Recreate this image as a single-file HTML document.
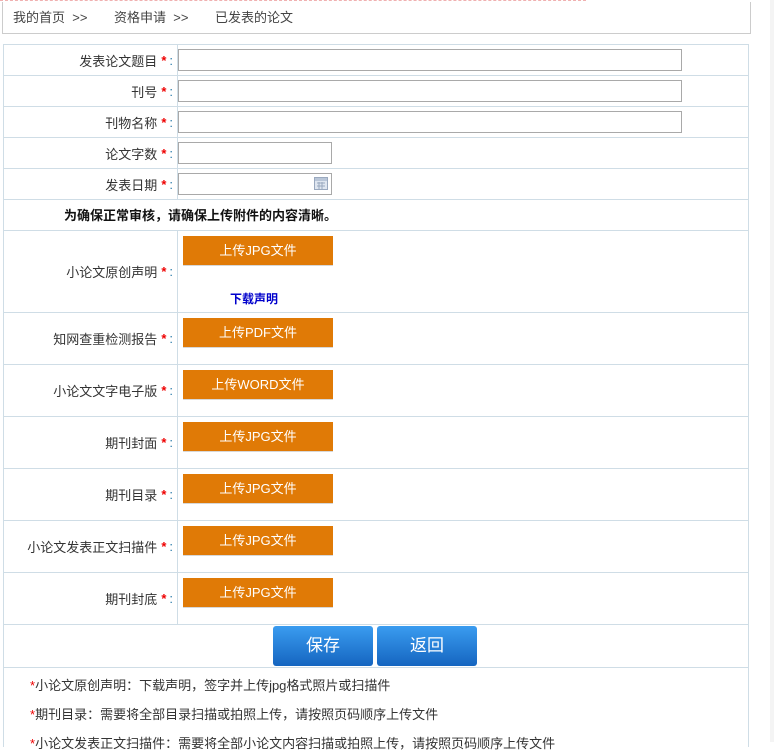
<!DOCTYPE html>
<html><head><meta charset="utf-8"><style>
*{margin:0;padding:0;box-sizing:border-box}
body{width:774px;height:742px;overflow:hidden;background:#fff;font-family:"Liberation Sans","Noto Sans CJK SC",sans-serif;font-size:13px;color:#333;position:relative}
.top{position:absolute;left:0;top:0;width:586px;border-top:1px dashed #f0b0b0}
.bc{position:absolute;left:2px;top:2px;width:749px;height:32px;border:1px solid #ccc;border-top:none;padding-left:10px;line-height:32px;color:#444}
.bc span{position:absolute;top:0}
.scroll{position:absolute;left:770px;top:0;width:4px;height:742px;background:#f4f4f4}
.row{position:absolute;left:3px;width:746px;border-top:1px solid #cfdde6;border-left:1px solid #cfdde6;border-right:1px solid #cfdde6}
.lab{position:absolute;left:0;width:174px;top:0;bottom:0;border-right:1px solid #cfdde6;text-align:right;padding-right:4px;display:flex;align-items:center;justify-content:flex-end;color:#333}
.lab i{font-style:normal;color:#e00;font-weight:bold;margin-left:4px}
.lab b{color:#2a7aaa;font-weight:normal;margin-left:3px}
.in{position:absolute;left:174px;height:22px;border:1px solid #a9a9a9;background:#fff}
.btn{position:absolute;left:179px;width:150px;height:30px;background:#e07a06;color:#fff;text-align:center;line-height:29px;font-size:13px;border-bottom:1px solid #d7d7d7}
.bb{position:absolute;top:626px;width:100px;height:40px;border-radius:3px;background:linear-gradient(#3a9cf0,#1565c0);color:#fff;font-size:17px;text-align:center;line-height:40px}
.note{position:absolute;left:30px;color:#333}
.note i{color:#e00;font-style:normal}
</style></head><body>
<div class="top"></div>
<div class="bc"><span style="left:10px">我的首页 &nbsp;&gt;&gt;</span><span style="left:111px">资格申请 &nbsp;&gt;&gt;</span><span style="left:212px">已发表的论文</span></div>
<div class="scroll"></div>

<div class="row" style="top:44px;height:31px"><div class="lab">发表论文题目<i>*</i><b>:</b></div><div class="in" style="top:4px;width:504px"></div></div>
<div class="row" style="top:75px;height:31px"><div class="lab">刊号<i>*</i><b>:</b></div><div class="in" style="top:4px;width:504px"></div></div>
<div class="row" style="top:106px;height:31px"><div class="lab">刊物名称<i>*</i><b>:</b></div><div class="in" style="top:4px;width:504px"></div></div>
<div class="row" style="top:137px;height:31px"><div class="lab">论文字数<i>*</i><b>:</b></div><div class="in" style="top:4px;width:154px"></div></div>
<div class="row" style="top:168px;height:31px"><div class="lab">发表日期<i>*</i><b>:</b></div><div class="in" style="top:4px;width:154px"><svg style="position:absolute;right:3px;top:3px" width="14" height="13"><rect x="0.5" y="0.5" width="13" height="12" fill="#dfe6f0" stroke="#9aa9bf"/><rect x="1" y="1" width="12" height="3" fill="#b9c6d8"/><path d="M3 6h8M3 9h8M5 5v7M8 5v7" stroke="#9aa9bf"/></svg></div></div>
<div class="row" style="top:199px;height:31px;"><div style="position:absolute;left:60px;top:5px;font-weight:bold;color:#111">为确保正常审核，请确保上传附件的内容清晰。</div></div>
<div class="row" style="top:230px;height:82px"><div class="lab">小论文原创声明<i>*</i><b>:</b></div><div class="btn" style="top:5px">上传JPG文件</div><div style="position:absolute;left:226px;top:59px;color:#00c;font-weight:bold;font-size:12px">下载声明</div></div>
<div class="row" style="top:312px;height:52px"><div class="lab">知网查重检测报告<i>*</i><b>:</b></div><div class="btn" style="top:5px">上传PDF文件</div></div>
<div class="row" style="top:364px;height:52px"><div class="lab">小论文文字电子版<i>*</i><b>:</b></div><div class="btn" style="top:5px">上传WORD文件</div></div>
<div class="row" style="top:416px;height:52px"><div class="lab">期刊封面<i>*</i><b>:</b></div><div class="btn" style="top:5px">上传JPG文件</div></div>
<div class="row" style="top:468px;height:52px"><div class="lab">期刊目录<i>*</i><b>:</b></div><div class="btn" style="top:5px">上传JPG文件</div></div>
<div class="row" style="top:520px;height:52px"><div class="lab">小论文发表正文扫描件<i>*</i><b>:</b></div><div class="btn" style="top:5px">上传JPG文件</div></div>
<div class="row" style="top:572px;height:52px"><div class="lab">期刊封底<i>*</i><b>:</b></div><div class="btn" style="top:5px">上传JPG文件</div></div>
<div class="row" style="top:624px;height:43px"></div>
<div class="row" style="top:667px;height:80px"></div>
<div class="bb" style="left:273px">保存</div>
<div class="bb" style="left:377px">返回</div>
<div class="note" style="top:675px"><i>*</i>小论文原创声明：下载声明，签字并上传jpg格式照片或扫描件</div>
<div class="note" style="top:704px"><i>*</i>期刊目录：需要将全部目录扫描或拍照上传，请按照页码顺序上传文件</div>
<div class="note" style="top:733px"><i>*</i>小论文发表正文扫描件：需要将全部小论文内容扫描或拍照上传，请按照页码顺序上传文件</div>
</body></html>
